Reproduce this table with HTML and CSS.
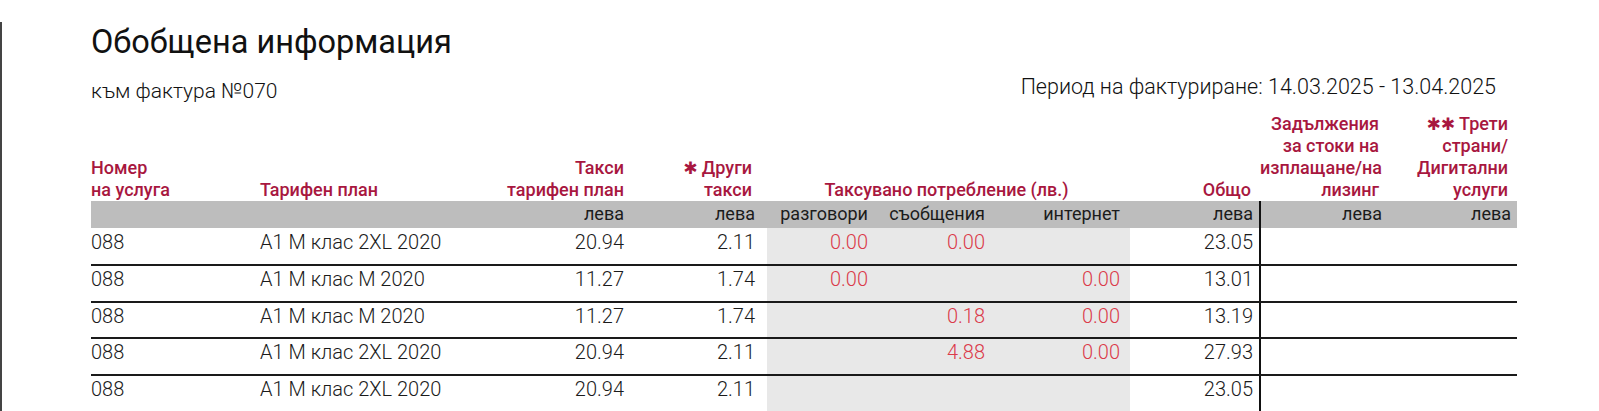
FILE: index.html
```html
<!DOCTYPE html>
<html lang="bg">
<head>
<meta charset="utf-8">
<title>Обобщена информация</title>
<link rel="stylesheet" href="styles.css">
</head>
<body>
<div class="page">
  <div class="sheet">
    <h1 class="title">Обобщена информация</h1>
    <div class="info">
      <span class="invoice">към фактура №070</span>
      <span class="period">Период на фактуриране: 14.03.2025 - 13.04.2025</span>
    </div>
    <table class="summary">
      <colgroup>
        <col class="c1"><col class="c2"><col class="c3"><col class="c4"><col class="c5">
        <col class="c6"><col class="c7"><col class="c8"><col class="c9"><col class="c10">
      </colgroup>
      <thead>
        <tr class="labels">
          <th class="l">Номер<br>на услуга</th>
          <th class="l">Тарифен план</th>
          <th class="r tight">Такси<br>тарифен план</th>
          <th class="r other"><span class="star">✱</span> Други<br>такси</th>
          <th class="c" colspan="3">Таксувано потребление (лв.)</th>
          <th class="r">Общо</th>
          <th class="r">Задължения<br>за стоки на<br>изплащане/на<br>лизинг</th>
          <th class="r"><span class="star">✱✱</span> Трети<br>страни/<br>Дигитални<br>услуги</th>
        </tr>
        <tr class="units">
          <th></th>
          <th></th>
          <th>лева</th>
          <th class="other">лева</th>
          <th>разговори</th>
          <th>съобщения</th>
          <th class="last-use">интернет</th>
          <th>лева</th>
          <th class="split">лева</th>
          <th>лева</th>
        </tr>
      </thead>
      <tbody>
        <tr class="first">
          <td class="l">088</td><td class="l">A1 M клас 2XL 2020</td><td>20.94</td><td class="other">2.11</td>
          <td class="use neg">0.00</td><td class="use neg">0.00</td><td class="use last-use neg"></td>
          <td>23.05</td><td class="split"></td><td></td>
        </tr>
        <tr>
          <td class="l">088</td><td class="l">A1 M клас M 2020</td><td>11.27</td><td class="other">1.74</td>
          <td class="use neg">0.00</td><td class="use neg"></td><td class="use last-use neg">0.00</td>
          <td>13.01</td><td class="split"></td><td></td>
        </tr>
        <tr>
          <td class="l">088</td><td class="l">A1 M клас M 2020</td><td>11.27</td><td class="other">1.74</td>
          <td class="use neg"></td><td class="use neg">0.18</td><td class="use last-use neg">0.00</td>
          <td>13.19</td><td class="split"></td><td></td>
        </tr>
        <tr>
          <td class="l">088</td><td class="l">A1 M клас 2XL 2020</td><td>20.94</td><td class="other">2.11</td>
          <td class="use neg"></td><td class="use neg">4.88</td><td class="use last-use neg">0.00</td>
          <td>27.93</td><td class="split"></td><td></td>
        </tr>
        <tr>
          <td class="l">088</td><td class="l">A1 M клас 2XL 2020</td><td>20.94</td><td class="other">2.11</td>
          <td class="use neg"></td><td class="use neg"></td><td class="use last-use neg"></td>
          <td>23.05</td><td class="split"></td><td></td>
        </tr>
      </tbody>
    </table>
  </div>
</div>
</body>
</html>
```

FILE: styles.css
```css
html, body {
  margin: 0;
  padding: 0;
  background: #ffffff;
}

body {
  font-family: Roboto, "Liberation Sans", sans-serif;
  color: #1b1b1b;
}

.page {
  min-height: 100vh;
  box-sizing: border-box;
  border-left: 2px solid #444444;
  padding-left: 89px;
}

.sheet {
  width: 1426px;
}

.title {
  margin: 22px 0 0;
  font-size: 32.5px;
  line-height: 40px;
  font-weight: 400;
  color: #111111;
}

.info {
  display: flex;
  justify-content: space-between;
  align-items: flex-start;
  margin-top: 17px;
  padding-right: 21px;
  line-height: 24px;
  font-weight: 300;
  color: #111111;
}

.invoice {
  font-size: 21px;
}

.period {
  margin-top: -4px;
  font-size: 21.5px;
}

.summary {
  margin-top: 10px;
  width: 1426px;
  table-layout: fixed;
  border-collapse: collapse;
}

.c1 { width: 169px; }
.c2 { width: 220px; }
.c3 { width: 150px; }
.c4 { width: 137px; }
.c5 { width: 107px; }
.c6 { width: 117px; }
.c7 { width: 139px; }
.c8 { width: 130px; }
.c9 { width: 128px; }
.c10 { width: 129px; }

.labels th {
  vertical-align: bottom;
  padding: 0 9px 0 0;
  font-size: 18px;
  line-height: 22px;
  font-weight: 500;
  color: #a8173f;
  white-space: nowrap;
}

.labels th.l {
  text-align: left;
  padding: 0;
}

.labels th.r {
  text-align: right;
}

.labels th.tight {
  padding-right: 6px;
}

.labels th.other {
  padding-right: 15px;
}

.labels th.c {
  text-align: center;
  padding: 0 4px 0 0;
}

.star {
  font-family: "DejaVu Sans", sans-serif;
  font-size: 17px;
  line-height: 1;
  font-weight: 700;
}

.units th {
  background: #bdbdbd;
  padding: 2px 6px 3px 0;
  text-align: right;
  font-size: 18px;
  line-height: 22px;
  font-weight: 400;
  color: #1b1b1b;
  vertical-align: top;
}

.units th.other {
  padding-right: 12px;
}

.units th.last-use {
  padding-right: 10px;
}

.summary .split {
  border-left: 2px solid #111111;
}

tbody td {
  padding: 1px 6px 9.67px 0;
  text-align: right;
  font-size: 20px;
  line-height: 24px;
  font-weight: 300;
  color: #1b1b1b;
  border-bottom: 2px solid #1a1a1a;
  vertical-align: top;
}

tbody tr.first td {
  padding-top: 2.33px;
}

tbody td.l {
  text-align: left;
  padding-right: 0;
}

tbody td.other {
  padding-right: 12px;
}

tbody td.use {
  background: #e8e8e8;
}

tbody td.last-use {
  padding-right: 10px;
}

tbody td.neg {
  color: #db3a4a;
}
```
